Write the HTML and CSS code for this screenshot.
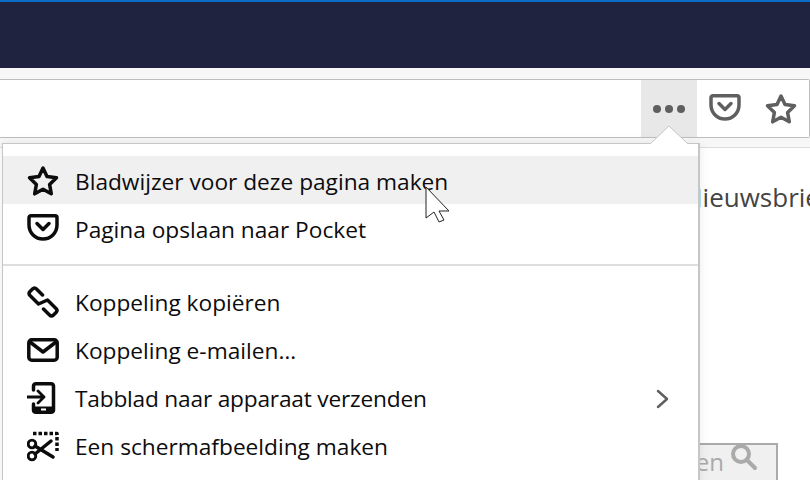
FILE: index.html
```html
<!DOCTYPE html>
<html lang="nl">
<head>
    <meta charset="UTF-8">
    <title>Paginamenu</title>
    <link rel="stylesheet" href="styles.css">
</head>
<body>
    <div class="tabbar"></div>

    <div class="toolbar">
        <div class="urlbar">
            <div class="url-actions">
                <div class="url-btn url-btn-open">
                    <span class="dot"></span><span class="dot"></span><span class="dot"></span>
                </div>
                <div class="url-btn">
                    <svg class="icon" viewBox="0 0 32 32"><path d="M4 2.750H28A2 2 0 0 1 30 4.750V12A14 14 0 0 1 2 12V4.750A2 2 0 0 1 4 2.750Z"/><path d="M10 10.500l6 6 6-6"/></svg>
                </div>
                <div class="url-btn">
                    <svg class="icon" viewBox="0 0 32 32"><path d="M16 3l4 8.500 9.500 1.300-6.900 6.600 1.700 9.400-8.300-4.500-8.300 4.500 1.700-9.400-6.900-6.600 9.500-1.300Z"/></svg>
                </div>
            </div>
        </div>
    </div>

    <div class="page">
        <div class="news-link">Nieuwsbrief</div>
        <div class="search-box">
            <span>Zoeken</span>
            <svg class="search-icon" viewBox="0 0 28 28"><circle cx="11" cy="11" r="8"/><path d="M17 17l8 8"/></svg>
        </div>
    </div>

    <!-- paginamenu -->
    <div class="menu">
        <svg class="menu-arrow" viewBox="0 0 40 20"><path d="M1 19L20 1l19 18"/></svg>

        <div class="menu-item menu-item-hover">
            <svg class="icon" viewBox="0 0 32 32"><path d="M16 3l4 8.500 9.500 1.300-6.900 6.600 1.700 9.400-8.300-4.500-8.300 4.500 1.700-9.400-6.900-6.600 9.500-1.300Z"/></svg>
            <span>Bladwijzer voor deze pagina maken</span>
        </div>
        <div class="menu-item">
            <svg class="icon" viewBox="0 0 32 32"><path d="M4 2.750H28A2 2 0 0 1 30 4.750V12A14 14 0 0 1 2 12V4.750A2 2 0 0 1 4 2.750Z"/><path d="M10 10.500l6 6 6-6"/></svg>
            <span>Pagina opslaan naar Pocket</span>
        </div>

        <div class="menu-sep"></div>

        <div class="menu-item">
            <svg class="icon" viewBox="0 0 32 32">
                <path d="M15.500 9L9.500 3Q7.500 1 5.500 3L3 5.500Q1 7.500 3 9.500L11.500 18L20.500 14L29 22.500Q31 24.500 29 26.500L26.500 29Q24.500 31 22.500 29L16.500 23"/>
            </svg>
            <span>Koppeling kopiëren</span>
        </div>
        <div class="menu-item">
            <svg class="icon" viewBox="0 0 32 32"><rect x="1.800" y="5.800" width="28.400" height="20.400" rx="3"/><path d="M3 8l13 10L29 8"/></svg>
            <span>Koppeling e-mailen…</span>
        </div>
        <div class="menu-item">
            <svg class="icon" viewBox="0 0 32 32">
                <path d="M6.500 8V4A2.500 2.500 0 0 1 9 1.750H24A2.500 2.500 0 0 1 26.500 4V28A2.500 2.500 0 0 1 24 30.250H9A2.500 2.500 0 0 1 6.500 28V22"/>
                <path class="thin" d="M0 15h17M11 9l6 6-6 6"/>
                <path class="base" d="M8 27h17"/>
                <rect class="home" x="14" y="26.500" width="5" height="2"/>
            </svg>
            <span class="tight">Tabblad naar apparaat verzenden</span>
        </div>
        <div class="menu-item">
            <svg class="icon" viewBox="0 0 32 32">
                <path class="dashed" d="M6 3.500H30V21"/>
                <circle class="thin" cx="5" cy="14" r="3.800"/>
                <circle class="thin" cx="5" cy="26" r="3.800"/>
                <path d="M8 16l18 11M8 24l16-13"/>
            </svg>
            <span>Een schermafbeelding maken</span>
        </div>

        <svg class="menu-chevron" viewBox="0 0 14 20"><path d="M2 2l9 8-9 8"/></svg>
    </div>

    <svg class="cursor" viewBox="0 0 26 38"><path d="M1 1V32L9 26 14 36 19 34 14 25H24Z"/></svg>
</body>
</html>
```

FILE: styles.css
```css
* {
    margin: 0;
    padding: 0;
    box-sizing: border-box;
}

html, body {
    height: 100%;
    overflow: hidden;
}

body {
    display: flex;
    flex-direction: column;
    background-color: #fff;
    font-family: "Open Sans", "Noto Sans", sans-serif;
    color: #0c0c0d;
}

.tabbar {
    height: 68px;
    flex: none;
    background-color: #20233f;
    border-top: 2px solid #0a6cc4;
}

.toolbar {
    flex: none;
    height: 80px;
    padding: 11px 0 0;
    background-color: #f7f7f7;
    border-bottom: 1px solid #dcdcdc;
}

.urlbar {
    display: flex;
    justify-content: flex-end;
    height: 59px;
    background-color: #fff;
    border: 1px solid #bdbdbd;
    border-left: none;
    border-radius: 0 2px 2px 0;
}

.url-actions {
    display: flex;
}

.url-btn {
    display: flex;
    align-items: center;
    justify-content: center;
    gap: 4px;
    width: 56px;
    color: #5f5f60;
}

.url-btn-open {
    background-color: #e8e8e8;
}

.dot {
    width: 8px;
    height: 8px;
    border-radius: 50%;
    background-color: #5f5f60;
}

.icon {
    width: 32px;
    height: 32px;
    flex: none;
    fill: none;
    stroke: currentColor;
    stroke-width: 3.5;
    stroke-linejoin: round;
    stroke-linecap: round;
}

.icon .thin {
    stroke-width: 2.800;
}

.icon .base {
    stroke-width: 5;
    stroke-linecap: butt;
}

.icon .dashed {
    stroke-dasharray: 3.500 2;
    stroke-linecap: butt;
}

.icon .home {
    fill: #fff;
    stroke: none;
}

/* pagina achter het menu */

.page {
    flex: 1;
    display: flex;
    flex-direction: column;
    align-items: flex-start;
    min-height: 0;
    padding: 31px 0 0 683px;
    overflow: hidden;
    white-space: nowrap;
}

.news-link {
    font-size: 26px;
    line-height: 36px;
    color: #444;
}

.search-box {
    display: flex;
    align-items: center;
    justify-content: flex-end;
    gap: 6px;
    width: 95px;
    height: 50px;
    margin-top: 228px;
    padding: 0 18px 14px 0;
    background-color: #f0f0f0;
    border: 2px solid #aaa;
    font-size: 24px;
    color: #aaa;
}

.search-icon {
    width: 28px;
    height: 28px;
    flex: none;
    margin-top: -8px;
    fill: none;
    stroke: #aaa;
    stroke-width: 4;
    stroke-linecap: round;
}

/* paginamenu */

.menu {
    position: absolute;
    left: 2px;
    top: 143px;
    width: 698px;
    height: 360px;
    padding-top: 12px;
    background-color: #fff;
    border: 1px solid #c6c6c6;
    border-width: 1px 2px 0 1px;
    box-shadow: 0 0 10px rgba(0, 0, 0, .08);
}

.menu-arrow {
    position: absolute;
    left: 646px;
    top: -19px;
    width: 40px;
    height: 20px;
    fill: #fff;
    stroke: #c6c6c6;
    stroke-width: 1;
}

.menu-item {
    display: flex;
    align-items: center;
    gap: 16px;
    height: 48px;
    padding: 2px 0 0 24px;
    font-size: 22.7px;
}

.menu-item .tight {
    letter-spacing: -.2px;
}

.menu-item-hover {
    background-color: #f0f0f0;
}

.menu-sep {
    height: 2px;
    margin: 12px 0 11px;
    background-color: #dedede;
}

.menu-chevron {
    position: absolute;
    left: 653px;
    top: 245px;
    width: 14px;
    height: 20px;
    fill: none;
    stroke: #5f5f60;
    stroke-width: 2.500;
    stroke-linecap: round;
    stroke-linejoin: round;
}

.cursor {
    position: absolute;
    left: 425px;
    top: 186px;
    width: 26px;
    height: 38px;
    fill: #fff;
    stroke: #222;
    stroke-width: 1;
}
```
